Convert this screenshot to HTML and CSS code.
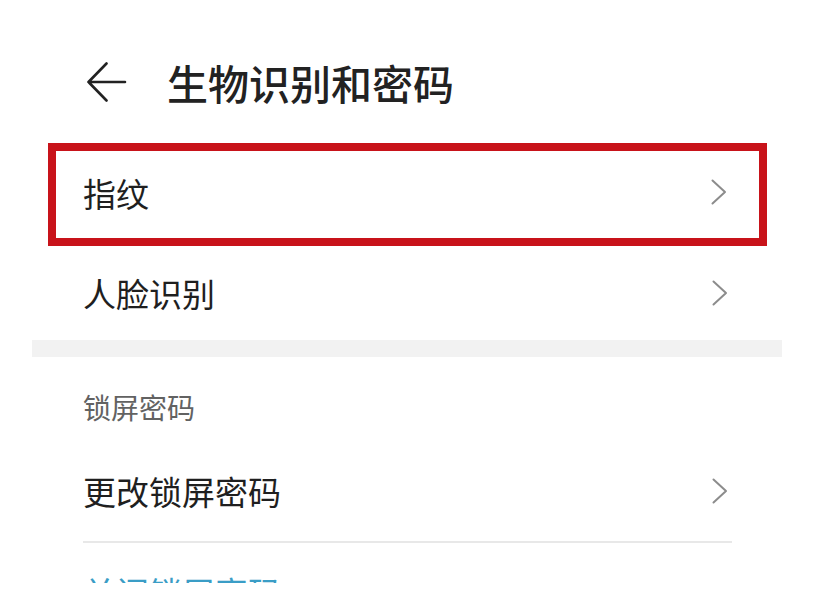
FILE: index.html
```html
<!DOCTYPE html>
<html lang="zh-CN">
<head>
<meta charset="utf-8">
<title>生物识别和密码</title>
<link rel="stylesheet" href="styles.css">
</head>
<body>
<div class="screen">
  <header class="header">
    <svg class="back" width="40" height="42" viewBox="0 0 40 42" aria-hidden="true">
      <path d="M1.5 21 H38 M19.5 2.5 L1.5 21 L19.5 39.5" fill="none" stroke="#222" stroke-width="2.6" stroke-linecap="round" stroke-linejoin="round"/>
    </svg>
    <h1 class="title">生物识别和密码</h1>
  </header>

  <div class="item item-highlight">
    <span class="label">指纹</span>
    <svg class="chev" width="16" height="26" viewBox="0 0 16 26" aria-hidden="true"><path d="M1.5 1.5 L14 13 L1.5 24.5" fill="none" stroke="#8c8c8c" stroke-width="2" stroke-linecap="round" stroke-linejoin="round"/></svg>
  </div>

  <div class="item item-plain">
    <span class="label">人脸识别</span>
    <svg class="chev" width="16" height="26" viewBox="0 0 16 26" aria-hidden="true"><path d="M1.5 1.5 L14 13 L1.5 24.5" fill="none" stroke="#8c8c8c" stroke-width="2" stroke-linecap="round" stroke-linejoin="round"/></svg>
  </div>

  <div class="band"></div>

  <div class="section-title">锁屏密码</div>

  <div class="item item-plain item-tall">
    <span class="label">更改锁屏密码</span>
    <svg class="chev" width="16" height="26" viewBox="0 0 16 26" aria-hidden="true"><path d="M1.5 1.5 L14 13 L1.5 24.5" fill="none" stroke="#8c8c8c" stroke-width="2" stroke-linecap="round" stroke-linejoin="round"/></svg>
  </div>
  <div class="divider"></div>

  <div class="item-link">关闭锁屏密码</div>
</div>
</body>
</html>
```

FILE: styles.css
```css
html, body {
  margin: 0;
  padding: 0;
  background: #ffffff;
}

body {
  font-family: "Noto Sans CJK SC", "Noto Sans", sans-serif;
  color: #1f1f1f;
}

.screen {
  width: 825px;
  height: 583px;
  overflow: hidden;
}

.header {
  display: flex;
  align-items: center;
  gap: 40px;
  height: 50px;
  margin: 57px 0 36px 0;
  padding-left: 87px;
}

.back {
  display: block;
  flex: none;
}

.title {
  margin: 0;
  font-size: 41px;
  line-height: 50px;
  font-weight: 500;
  color: #222222;
}

.item {
  display: flex;
  align-items: center;
  justify-content: space-between;
  box-sizing: border-box;
}

.label {
  font-size: 33px;
  line-height: 40px;
}

.chev {
  display: block;
  flex: none;
}

.item-highlight {
  margin-left: 48px;
  width: 719px;
  height: 103px;
  border: 8px solid #c8131a;
  padding: 0 32px 0 27px;
}

.item-highlight .label {
  margin-top: -4px;
}

.item-highlight .chev {
  margin-top: -6px;
}

.item-plain {
  height: 94px;
  padding: 0 97px 0 83px;
}

.item-tall {
  height: 100px;
}

.band {
  margin: 0 43px 0 32px;
  height: 17px;
  background: #f2f2f2;
}

.section-title {
  padding: 34px 0 18px 83px;
  font-size: 28px;
  line-height: 32px;
  color: #626262;
}

.divider {
  margin: 0 93px 0 83px;
  height: 2px;
  background: #e8e8e8;
}

.item-link {
  padding: 32px 0 0 83px;
  font-size: 33px;
  line-height: 34px;
  color: #3a9dc6;
}
```
